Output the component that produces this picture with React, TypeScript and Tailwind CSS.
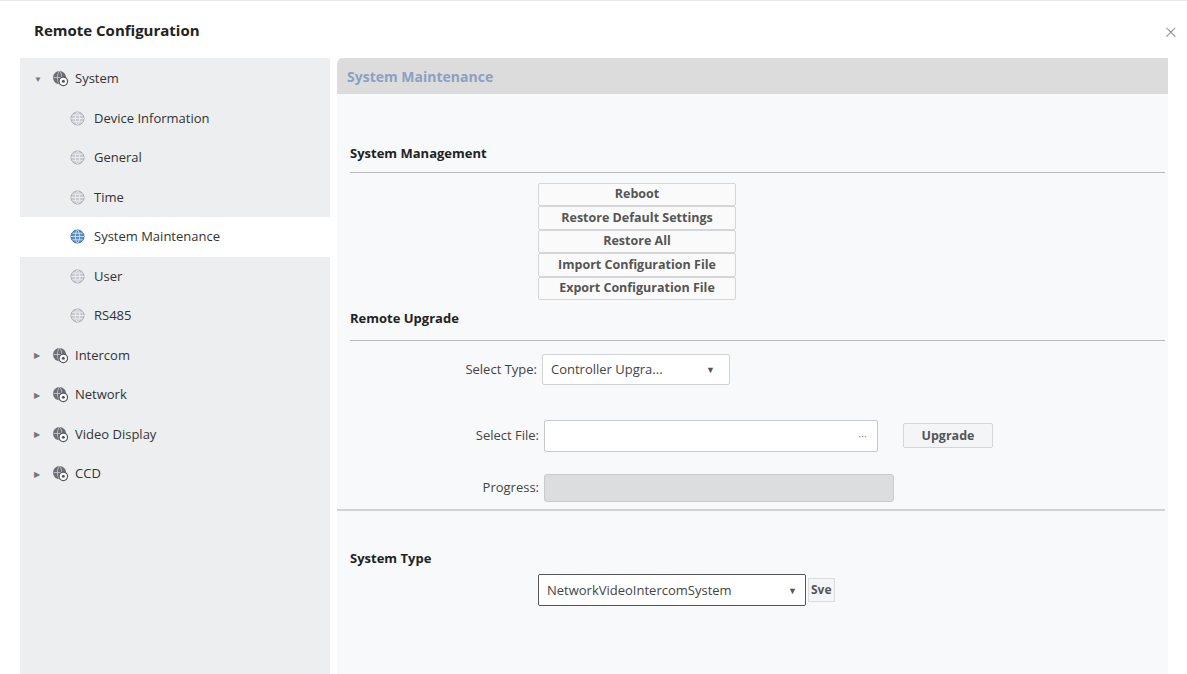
import React from "react";

const Globe = ({ blue }: { blue?: boolean }) => (
  <svg width="15" height="15" viewBox="0 0 16 16">
    <circle cx="8" cy="8" r="7" fill={blue ? "#5b8fc4" : "#c9ccd0"} stroke={blue ? "#3f74ab" : "#a8acb2"} />
    <path d="M1 8h14M8 1c-3 3-3 11 0 14M8 1c3 3 3 11 0 14M2.5 4.5h11M2.5 11.5h11" stroke={blue ? "#d6e6f5" : "#eef0f2"} strokeWidth="0.9" fill="none" />
  </svg>
);

const GroupIcon = () => (
  <svg width="17" height="17" viewBox="0 0 18 18">
    <circle cx="8" cy="8" r="7" fill="#6b6f75" />
    <path d="M1.5 8h13M8 1c-3 3-3 11 0 14M8 1c3 3 3 11 0 14" stroke="#c8cbcf" strokeWidth="0.9" fill="none" />
    <circle cx="12" cy="12" r="4.5" fill="#fff" stroke="#55595e" strokeWidth="1.3" />
    <circle cx="12" cy="12" r="1.6" fill="#55595e" />
  </svg>
);

const Row = ({ label, sel }: { label: string; sel?: boolean }) => (
  <div className={`flex items-center gap-[9px] h-[39.5px] pl-[50px] ${sel ? "bg-white" : ""}`}>
    <Globe blue={sel} />
    <span className="text-[13px] text-[#333]">{label}</span>
  </div>
);

const Group = ({ label, open }: { label: string; open?: boolean }) => (
  <div className="flex items-center h-[39.5px] pl-[14px]">
    <span className="text-[8px] text-[#777] w-[18px]">{open ? "▼" : "▶"}</span>
    <GroupIcon />
    <span className="ml-[6px] text-[13px] text-[#333]">{label}</span>
  </div>
);

const Btn = ({ t }: { t: string }) => (
  <div className="h-[23.6px] w-[198px] border border-[#d4d6d9] bg-[#fafafa] flex items-center justify-center text-[12.5px] font-bold text-[#555] rounded-[2px] whitespace-nowrap overflow-hidden">
    {t}
  </div>
);

export default function App() {
  const f = { fontFamily: '"Open Sans", "Noto Sans", sans-serif' };
  return (
    <div style={f} className="w-[1187px] h-[674px] bg-white relative overflow-hidden border-t border-[#e8e8e8]">
      <div className="h-[57px] flex items-center pl-[34px] pt-[2px]">
        <span className="text-[15px] font-bold text-[#222]">Remote Configuration</span>
      </div>
      <div className="absolute right-[10px] top-[19px] text-[#888] text-[22px] font-light leading-none">×</div>
      <div className="flex h-[617px] pl-[20px] gap-[7px] pr-[19px]">
        <div className="w-[310px] bg-[#eceef0] pt-[1px]">
          <Group label="System" open />
          <Row label="Device Information" />
          <Row label="General" />
          <Row label="Time" />
          <Row label="System Maintenance" sel />
          <Row label="User" />
          <Row label="RS485" />
          <Group label="Intercom" />
          <Group label="Network" />
          <Group label="Video Display" />
          <Group label="CCD" />
        </div>
        <div className="flex-1 bg-[#f7f9fb]">
          <div className="h-[36px] bg-[#dcdcdc] rounded-tl-[6px] flex items-center pl-[10px]">
            <span className="text-[14px] font-bold text-[#8aa0c4]">System Maintenance</span>
          </div>
          <div className="pl-[13px] pr-[3px]">
            <div className="mt-[50px] text-[13px] font-bold text-[#222]">System Management</div>
            <div className="mt-[8px] border-t border-[#b8babd]" />
            <div className="ml-[188px] mt-[10px] flex flex-col">
              <Btn t="Reboot" />
              <Btn t="Restore Default Settings" />
              <Btn t="Restore All" />
              <Btn t="Import Configuration File" />
              <Btn t="Export Configuration File" />
            </div>
            <div className="mt-[9px] text-[13px] font-bold text-[#222]">Remote Upgrade</div>
            <div className="mt-[11px] border-t border-[#b8babd]" />
            <div className="flex items-center mt-[13px]">
              <span className="w-[192px] text-right pr-[5px] text-[13px] text-[#444]">Select Type:</span>
              <div className="w-[188px] h-[31px] border border-[#d0d2d5] bg-white flex items-center justify-between px-[8px] text-[13px] text-[#444] rounded-[2px]">
                <span>Controller Upgra...</span>
                <span className="text-[9px] text-[#555] pr-[6px]">▼</span>
              </div>
            </div>
            <div className="flex items-center mt-[35px]">
              <span className="w-[194px] text-right pr-[5px] text-[13px] text-[#444]">Select File:</span>
              <div className="w-[334px] h-[32px] border border-[#c6c8cb] bg-white flex items-center justify-end pr-[10px] text-[11px] text-[#888] rounded-[2px]">···</div>
              <div className="ml-[25px] w-[90px] h-[25px] border border-[#d4d6d9] bg-[#f4f5f6] flex items-center justify-center text-[12.5px] font-bold text-[#555] rounded-[2px]">Upgrade</div>
            </div>
            <div className="flex items-center mt-[22px]">
              <span className="w-[194px] text-right pr-[5px] text-[13px] text-[#444]">Progress:</span>
              <div className="w-[350px] h-[28px] border border-[#c8cacc] bg-[#dcdddf] rounded-[3px]" />
            </div>
          </div>
          <div className="mt-[7px] border-t-2 border-[#d0d2d4] mr-[3px]" />
          <div className="pl-[13px]">
            <div className="mt-[38px] text-[13px] font-bold text-[#222]">System Type</div>
            <div className="flex items-center mt-[6px] ml-[188px]">
              <div className="w-[268px] h-[32px] border border-[#555] bg-white flex items-center justify-between pl-[8px] pr-[8px] text-[13px] text-[#444] rounded-[2px]">
                <span>NetworkVideoIntercomSystem</span>
                <span className="text-[9px] text-[#555]">▼</span>
              </div>
              <div className="ml-[2px] h-[24px] px-[2px] border border-[#dcdcdc] bg-[#f4f5f6] flex items-center text-[12px] font-bold text-[#555]">Sve</div>
            </div>
          </div>
        </div>
      </div>
    </div>
  );
}
